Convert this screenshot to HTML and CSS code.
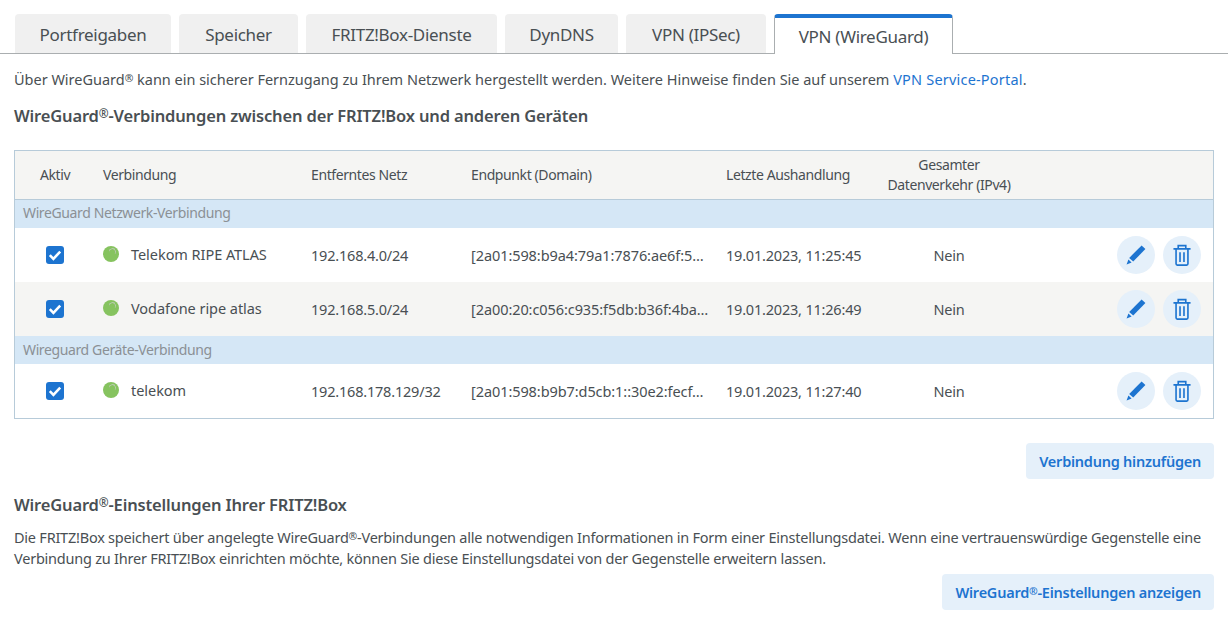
FILE: index.html
```html
<!DOCTYPE html>
<html lang="de">
<head>
<meta charset="utf-8">
<title>VPN (WireGuard)</title>
<link rel="stylesheet" href="styles.css">
</head>
<body>
<svg class="defs" width="0" height="0" aria-hidden="true">
  <symbol id="i-pen" viewBox="0 0 20 20"><path d="M15.6 0.4 19.4 4 7.2 16.6 3.2 12.9Z" fill="currentColor"/><path d="M2.4 14.4 5.6 17.4 0.6 19.4Z" fill="currentColor"/></symbol>
  <symbol id="i-trash" viewBox="0 0 20 24"><path d="M0.5 5.2H19.5M5.8 5V1.6H14.2V5M3.4 5.2V21.8Q3.4 23.2 4.8 23.2H15.2Q16.6 23.2 16.6 21.8V5.2M7.8 9V19.8M12.2 9V19.8" fill="none" stroke="currentColor" stroke-width="1.8"/></symbol>
  <symbol id="i-check" viewBox="0 0 18 18"><rect width="18" height="18" rx="3" fill="#1d74d0"/><path d="M3.8 9.2 7.4 12.8 14.2 5.6" fill="none" stroke="#fff" stroke-width="2.6"/></symbol>
</svg>
<nav class="tabs">
  <a class="tab">Portfreigaben</a>
  <a class="tab">Speicher</a>
  <a class="tab">FRITZ!Box-Dienste</a>
  <a class="tab">DynDNS</a>
  <a class="tab">VPN (IPSec)</a>
  <a class="tab tab-active">VPN (WireGuard)</a>
</nav>
<main class="content">
  <p class="intro">Über WireGuard<span class="reg">®</span> kann ein sicherer Fernzugang zu Ihrem Netzwerk hergestellt werden. Weitere Hinweise finden Sie auf unserem <a class="link">VPN Service-Portal</a>.</p>
  <h2 class="heading">WireGuard<span class="reg">®</span>-Verbindungen zwischen der FRITZ!Box und anderen Geräten</h2>
  <div class="table-wrap">
    <table class="conn">
      <colgroup><col class="c1"><col class="c2"><col class="c3"><col class="c4"><col class="c5"><col class="c6"><col class="c7"></colgroup>
      <thead>
        <tr><th class="center">Aktiv</th><th>Verbindung</th><th>Entferntes Netz</th><th>Endpunkt (Domain)</th><th>Letzte Aushandlung</th><th class="center">Gesamter<br>Datenverkehr (IPv4)</th><th></th></tr>
      </thead>
      <tbody>
        <tr class="group"><td colspan="7">WireGuard Netzwerk-Verbindung</td></tr>
        <tr>
          <td class="center"><svg class="check"><use href="#i-check"/></svg></td>
          <td><span class="name"><span class="led"></span>Telekom RIPE ATLAS</span></td>
          <td>192.168.4.0/24</td>
          <td><span class="clip">[2a01:598:b9a4:79a1:7876:ae6f:5…</span></td>
          <td>19.01.2023, 11:25:45</td>
          <td class="center">Nein</td>
          <td><div class="actions"><button class="round"><svg class="pen"><use href="#i-pen"/></svg></button><button class="round"><svg class="trash"><use href="#i-trash"/></svg></button></div></td>
        </tr>
        <tr class="alt">
          <td class="center"><svg class="check"><use href="#i-check"/></svg></td>
          <td><span class="name"><span class="led"></span>Vodafone ripe atlas</span></td>
          <td>192.168.5.0/24</td>
          <td><span class="clip">[2a00:20:c056:c935:f5db:b36f:4ba…</span></td>
          <td>19.01.2023, 11:26:49</td>
          <td class="center">Nein</td>
          <td><div class="actions"><button class="round"><svg class="pen"><use href="#i-pen"/></svg></button><button class="round"><svg class="trash"><use href="#i-trash"/></svg></button></div></td>
        </tr>
        <tr class="group"><td colspan="7">Wireguard Geräte-Verbindung</td></tr>
        <tr>
          <td class="center"><svg class="check"><use href="#i-check"/></svg></td>
          <td><span class="name"><span class="led"></span>telekom</span></td>
          <td>192.168.178.129/32</td>
          <td><span class="clip">[2a01:598:b9b7:d5cb:1::30e2:fecf…</span></td>
          <td>19.01.2023, 11:27:40</td>
          <td class="center">Nein</td>
          <td><div class="actions"><button class="round"><svg class="pen"><use href="#i-pen"/></svg></button><button class="round"><svg class="trash"><use href="#i-trash"/></svg></button></div></td>
        </tr>
      </tbody>
    </table>
  </div>
  <div class="btn-row btn-row-first"><button class="btn">Verbindung hinzufügen</button></div>
  <h2 class="heading heading-second">WireGuard<span class="reg">®</span>-Einstellungen Ihrer FRITZ!Box</h2>
  <p class="desc">Die FRITZ!Box speichert über angelegte WireGuard<span class="reg">®</span>-Verbindungen alle notwendigen Informationen in Form einer Einstellungsdatei. Wenn eine vertrauenswürdige Gegenstelle eine Verbindung zu Ihrer FRITZ!Box einrichten möchte, können Sie diese Einstellungsdatei von der Gegenstelle erweitern lassen.</p>
  <div class="btn-row"><button class="btn">WireGuard<span class="reg">®</span>-Einstellungen anzeigen</button></div>
</main>
</body>
</html>
```
FILE: styles.css
```css
* { box-sizing: border-box; }
html, body { margin: 0; padding: 0; }
body {
  width: 1228px;
  height: 623px;
  overflow: hidden;
  background: #fff;
  color: #494f53;
  font-family: "Noto Sans", "Open Sans", sans-serif;
  font-size: 14.5px;
  letter-spacing: -0.2px;
}
.defs { position: absolute; }
.reg { font-size: 0.72em; vertical-align: 0.3em; line-height: 0; }
.tabs {
  display: flex;
  gap: 8px;
  height: 54px;
  padding: 14px 0 0 15px;
  border-bottom: 1px solid #aaaeb0;
}
.tab {
  display: flex;
  align-items: center;
  justify-content: center;
  height: 39px;
  padding-top: 2px;
  background: #f0f0f0;
  border-radius: 4px 4px 0 0;
  font-size: 17px;
  letter-spacing: -0.3px;
}
.tab:nth-child(1) { width: 156px; }
.tab:nth-child(2) { width: 119px; }
.tab:nth-child(3) { width: 191px; }
.tab:nth-child(4) { width: 113px; }
.tab:nth-child(5) { width: 140px; }
.tab-active {
  width: 179px;
  height: 40px;
  padding-top: 0;
  background: #fff;
  border: 1px solid #aaaeb0;
  border-top: 4px solid #1d74d0;
  border-bottom: 0;
}
.content { padding: 0 14px; }
.intro { margin: 15px 0 0; line-height: 20px; height: 20px; white-space: nowrap; letter-spacing: -0.015px; }
.link { color: #1d74d0; letter-spacing: 0.2px; }
.heading { margin: 0; font-size: 16.5px; font-weight: 600; line-height: 24px; letter-spacing: -0.16px; }
.intro + .heading { margin-top: 15px; }
.table-wrap { margin-top: 22px; border: 1px solid #b7cbd9; }
.conn { width: 1198px; table-layout: fixed; border-collapse: collapse; }
.c1 { width: 80px; }
.c2 { width: 208px; }
.c3 { width: 160px; }
.c4 { width: 255px; }
.c5 { width: 162px; }
.c6 { width: 138px; }
th {
  height: 48px;
  padding: 0 8px;
  background: #f5f5f3;
  border-bottom: 1px solid #b7cbd9;
  font-weight: 400;
  font-size: 14px;
  line-height: 20px;
  letter-spacing: -0.4px;
  text-align: left;
  white-space: nowrap;
}
td { height: 54px; padding: 0 8px; white-space: nowrap; }
.center { text-align: center; padding-left: 0; padding-right: 0; }
.group td {
  height: 28px;
  padding-bottom: 2px;
  background: #d5e7f6;
  color: #8b9095;
  font-size: 14px;
  letter-spacing: -0.38px;
}
tbody .group:first-child td { height: 29px; }
.alt td { background: #f5f5f3; }
.check { display: block; width: 18px; height: 18px; margin: 0 auto; }
.name { display: flex; align-items: center; gap: 12px; position: relative; top: -1px; letter-spacing: -0.05px; }
.led { position: relative; width: 16px; height: 16px; border-radius: 50%; background: #86c35f; flex: none; }
.led::after {
  content: "";
  position: absolute;
  left: 6px;
  top: 2px;
  width: 6px;
  height: 6px;
  border-radius: 50%;
  border-top: 1px solid #b9c9b0;
  border-right: 1px solid #b9c9b0;
  transform: rotate(-20deg);
}
.clip { display: block; overflow: hidden; letter-spacing: -0.08px; }
.actions { display: flex; justify-content: flex-end; gap: 8px; padding-right: 4px; }
.round {
  display: flex;
  align-items: center;
  justify-content: center;
  width: 38px;
  height: 38px;
  padding: 0;
  border: 0;
  border-radius: 50%;
  background: #e5f0fa;
  color: #1d74d0;
}
.pen { width: 20px; height: 20px; }
.trash { width: 18px; height: 22px; }
.btn-row { display: flex; justify-content: flex-end; }
.btn-row-first { margin-top: 24px; }
.btn {
  height: 36px;
  padding: 0 13px;
  border: 0;
  border-radius: 4px;
  background: #e5f0fa;
  color: #1d74d0;
  font: inherit;
  font-weight: 600;
  font-size: 14.5px;
  letter-spacing: -0.24px;
}
.heading-second { margin-top: 14px; }
.desc { margin: 10px 0 0; line-height: 21px; letter-spacing: -0.23px; }
.desc + .btn-row { margin-top: 5px; }
```
